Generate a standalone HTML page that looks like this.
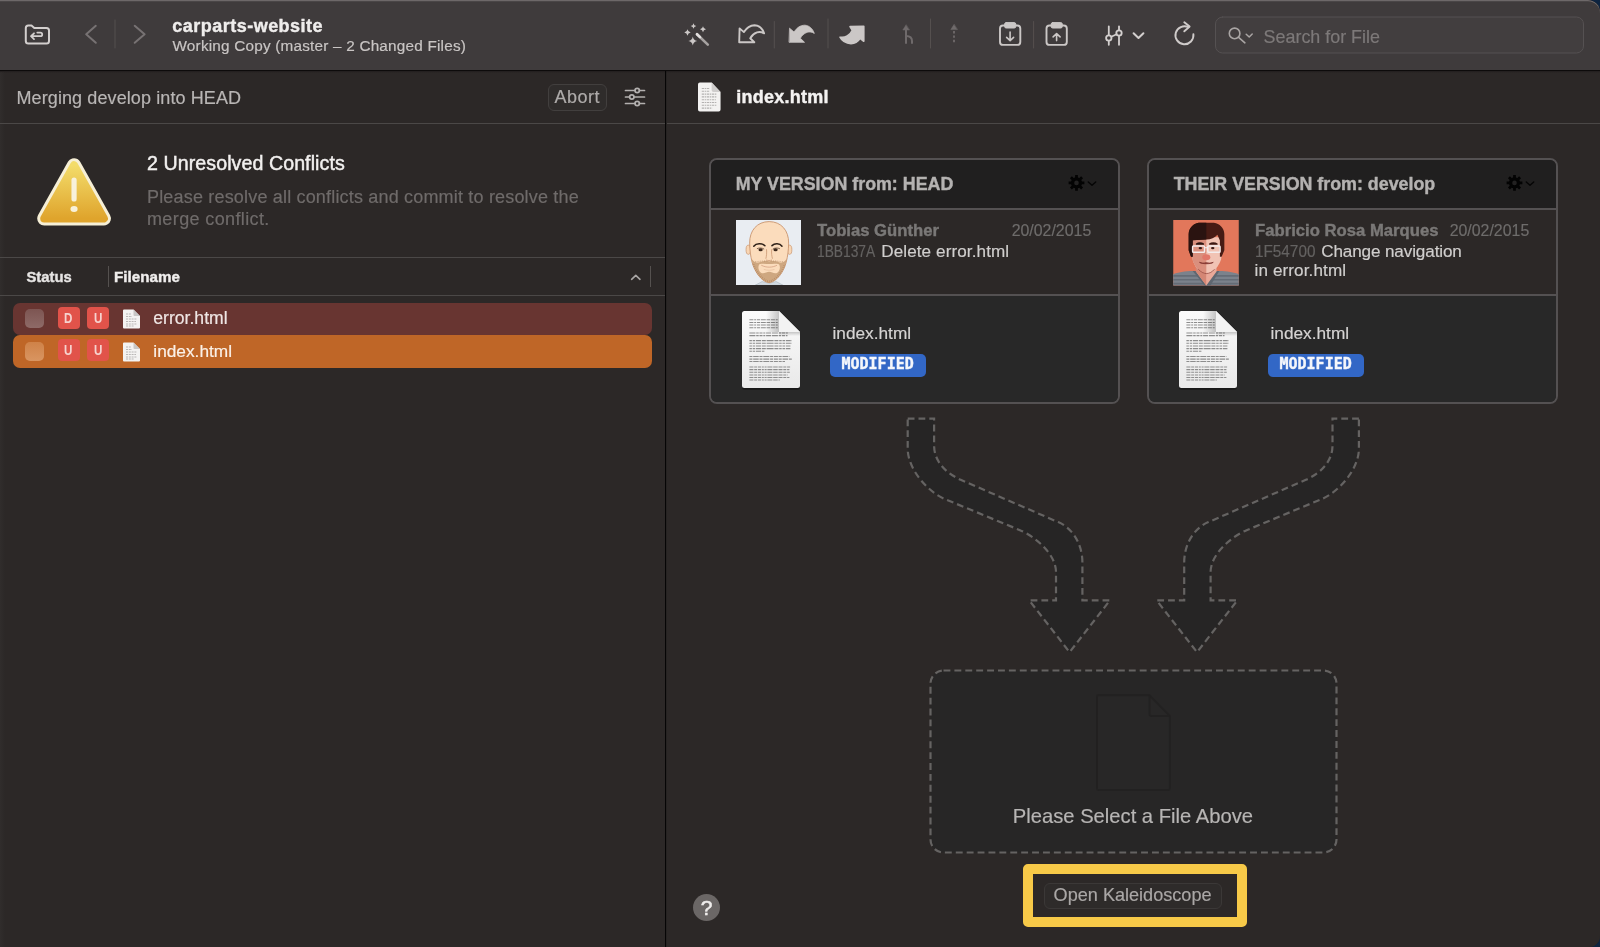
<!DOCTYPE html>
<html lang="en">
<head>
<meta charset="utf-8">
<title>carparts-website</title>
<style>
*{box-sizing:border-box;margin:0;padding:0}
html,body{width:1600px;height:947px;overflow:hidden;background:#0d2440}
body{font-family:"Liberation Sans",sans-serif;color:#dcdcdc;position:relative}
.abs{position:absolute}
.t{position:absolute;white-space:nowrap;line-height:1;-webkit-text-stroke:.18px currentColor}
.t[style*="font-weight:700"]{-webkit-text-stroke:.4px currentColor}
#win{will-change:transform;position:absolute;left:0;top:0;width:1600px;height:947px;background:#2c2827;border-radius:0 12px 11px 0;overflow:hidden}
#rim{position:absolute;left:-2px;top:0;width:1602px;height:960px;border-radius:0 12px 0 0;box-shadow:inset 0 1.2px 0 0 #6d6869;pointer-events:none}
#ledge{position:absolute;left:0;top:72px;width:5px;height:875px;background:linear-gradient(90deg,rgba(255,255,255,.025),rgba(255,255,255,0))}
#toolbar{position:absolute;left:0;top:0;width:1600px;height:70px;background:#3f3b3c}
#tbline{position:absolute;left:0;top:70px;width:1600px;height:3px;background:linear-gradient(#0d0b0b 0,#0d0b0b 34%,#231f1f 45%,#2c2827 100%)}
#left{position:absolute;left:0;top:71px;width:665px;height:876px;background:#2c2827}
#right{position:absolute;left:666px;top:71px;width:934px;height:876px;background:#2c2827}
#vdiv{position:absolute;left:665px;top:71px;width:1px;height:876px;background:#060505;box-shadow:.5px 0 0 rgba(0,0,0,.25)}
.hl{position:absolute;height:1px;background:#4b4847}
.sep{position:absolute;width:1px;background:#514d4e}
.bd span{display:inline-block;transform:scaleX(.8)}
.bd{width:22px;height:22px;border-radius:4px;background:#e1534a;color:#f6d3cf;font-size:14.5px;font-weight:700;text-align:center;line-height:22px}
</style>
</head>
<body>
<div id="win">
<div id="toolbar"></div>
<div id="left"></div>
<div id="right"></div>
<div id="tbline"></div>
<div id="vdiv"></div>
<div id="ledge"></div>

<!-- TOOLBAR -->
<svg class="abs" style="left:0;top:0" width="1600" height="72" viewBox="0 0 1600 72" fill="none" stroke-linecap="round" stroke-linejoin="round">
<!-- folder -->
<g stroke="#d3cfce" stroke-width="2">
<path d="M25.8 28 a2.5 2.5 0 0 1 2.5 -2.5 H31.5 L34.3 27.9 H46.5 a2.5 2.5 0 0 1 2.5 2.5 V41 a2.5 2.5 0 0 1 -2.5 2.5 H28.3 a2.5 2.5 0 0 1 -2.5 -2.5 Z"/>
<path d="M34 33.3 L31 36.2 L34 39.1 M31.3 36.2 H40.4 a1.8 1.8 0 0 0 0 -3.6 H37.3" stroke-width="1.8"/>
</g>
<!-- nav -->
<path d="M95.8 25.8 L86.2 34.3 L95.8 42.8" stroke="#777273" stroke-width="2"/>
<path d="M134.7 25.8 L144.6 34.3 L134.7 42.8" stroke="#777273" stroke-width="2"/>
<path d="M115 20 V48" stroke="#55504f" stroke-width="1"/>
<!-- magic wand -->
<g fill="#cbc7c6" stroke="none">
<path d="M693.5 23.2 q0.4 2.4 2.8 2.8 q-2.4 0.4 -2.8 2.8 q-0.4 -2.4 -2.8 -2.8 q2.4 -0.4 2.8 -2.8Z"/>
<path d="M703 26.2 q0.45 2.55 3 3 q-2.55 0.45 -3 3 q-0.45 -2.55 -3 -3 q2.55 -0.45 3 -3Z"/>
<path d="M687.5 29.3 q0.5 2.7 3.2 3.2 q-2.7 0.5 -3.2 3.2 q-0.5 -2.7 -3.2 -3.2 q2.7 -0.5 3.2 -3.2Z"/>
<path d="M692.8 36.6 q0.6 3.8 4.4 4.4 q-3.8 0.6 -4.4 4.4 q-0.6 -3.8 -4.4 -4.4 q3.8 -0.6 4.4 -4.4Z"/>
</g>
<path d="M697 34.2 L707.8 44.6" stroke="#a6a2a1" stroke-width="2.6"/>
<path d="M697 34.2 L700 37.1" stroke="#e2dfde" stroke-width="2.6"/>
<!-- pull outline -->
<path id="pullp" d="M739.6 28.4 L743.9 32.1 C746.5 27.8 750 25.3 754.5 25.2 C759 25.4 762.6 28.8 764.1 33.4 C761.8 31.9 759.3 31.6 757 32.3 C753.8 33.4 751.5 35.6 750.2 38.3 L754.3 42.3 H739.2 Z" stroke="#cbc7c6" stroke-width="1.9"/>
<path d="M774.3 21.5 V48" stroke="#55504f" stroke-width="1"/>
<!-- fetch filled -->
<path d="M739.6 28.4 L743.9 32.1 C746.5 27.8 750 25.3 754.5 25.2 C759 25.4 762.6 28.8 764.1 33.4 C761.8 31.9 759.3 31.6 757 32.3 C753.8 33.4 751.5 35.6 750.2 38.3 L754.3 42.3 H739.2 Z" transform="translate(50.2 0)" fill="#cbc7c6" stroke="#cbc7c6" stroke-width="0.8"/>
<path d="M828 19 V48" stroke="#55504f" stroke-width="1"/>
<!-- push filled -->
<path d="M850 26.6 L863.8 26.2 V41.3 L860.1 38.3 C858 41.6 855 43.6 851 43.6 C846.5 43.4 842 41 840 37.2 C842.5 37.7 845 37.3 847.2 36 C849.7 34.6 851.4 32.6 852.3 30.4 Z" fill="#cbc7c6" stroke="#cbc7c6" stroke-width="1.6"/>
<!-- merge (dim) -->
<g stroke="#6f6a6b" stroke-width="2">
<path d="M906 43 V28"/>
<path d="M906 36 C910 36 912 38 912 41 V43"/>
<path d="M906 25 L902.8 30 H909.2 Z" fill="#6f6a6b" stroke-width=".5"/>
</g>
<path d="M930.5 19 V48" stroke="#55504f" stroke-width="1"/>
<!-- rebase (dim dashed) -->
<g stroke="#6f6a6b">
<path d="M954 31 V43.5" stroke-width="1.8" stroke-dasharray="2.4 2" stroke-linecap="butt"/>
<path d="M954 24.6 L950.8 29.6 H957.2 Z" fill="#6f6a6b" stroke-width=".5"/>
</g>
<!-- stash -->
<g stroke="#cbc7c6" stroke-width="1.9">
<rect x="1000" y="25.5" width="20.3" height="19.4" rx="3"/>
<rect x="1004.6" y="22.6" width="11.2" height="5.4" rx="1.6" fill="#cbc7c6" stroke-width="1"/>
<path d="M1010.1 32 V40.4 M1006.6 37.4 L1010.1 40.7 L1013.6 37.4" stroke-width="1.6"/>
<rect x="1046.5" y="25.5" width="20.3" height="19.4" rx="3"/>
<rect x="1051.1" y="22.6" width="11.2" height="5.4" rx="1.6" fill="#cbc7c6" stroke-width="1"/>
<path d="M1056.6 40.6 V33.8 M1053.1 36.9 L1056.6 33.6 L1060.1 36.9" stroke-width="1.6"/>
</g>
<path d="M1033.6 21.5 V48" stroke="#55504f" stroke-width="1"/>
<!-- sliders -->
<g stroke="#d3cfce" stroke-width="1.8">
<path d="M1108.8 26.3 V35 M1108.8 41 V44.8 M1119 26.3 V30 M1119 36 V44.8 M1111.3 36.7 L1116.6 34.2"/>
<circle cx="1108.8" cy="38" r="2.7"/><circle cx="1119" cy="33" r="2.7"/>
<path d="M1133.6 33.2 L1138.5 38 L1143.4 33.2" stroke-width="2"/>
</g>
<!-- refresh -->
<g stroke="#cfcbca" stroke-width="1.9">
<path d="M1193.4 34.2 A9 9 0 1 1 1188.5 27.2"/>
<path d="M1184.3 22.3 L1189.6 26.6 L1184.3 31.3"/>
</g>
<!-- search -->
<rect x="1215.5" y="17" width="368" height="36" rx="7" fill="#423e3f" stroke="#555152" stroke-width="1"/>
<g stroke="#a9a5a4" stroke-width="1.6">
<circle cx="1234.6" cy="33.4" r="5.3"/><path d="M1238.6 37.3 L1244.9 42.8"/>
<path d="M1246.2 34.2 L1249.2 37 L1252.2 34" stroke-width="1.5"/>
</g>
</svg>
<div class="t" style="left:172.3px;top:16.8px;font-size:18px;font-weight:700;letter-spacing:0.48px;color:#efedec">carparts-website</div>
<div class="t" style="left:172.5px;top:38.4px;font-size:15.3px;letter-spacing:0.21px;color:#c9c5c4">Working Copy (master – 2 Changed Files)</div>
<div class="t" style="left:1263.6px;top:29.3px;font-size:17.9px;color:#7d7979">Search for File</div>
<svg width="0" height="0" style="position:absolute"><defs>
<g id="sfile">
<path d="M1 0.5 H10.5 L17 7 V18.5 a1 1 0 0 1 -1 1 H1 a1 1 0 0 1 -1 -1 V1.5 a1 1 0 0 1 1 -1 Z" fill="#f4f3f2"/>
<path d="M10.5 0.5 V6 a1 1 0 0 0 1 1 H17 Z" fill="#c9c7c6"/>
<path d="M3 5H8M3 7.5H9M3 10H14M3 12.5H13M3 15H14M3 17H11" stroke="#b9b7b6" stroke-width="1" stroke-dasharray="2 0.8"/>
</g>
</defs></svg>
<!-- LEFT PANEL -->
<div class="t" style="left:16.5px;top:88.6px;font-size:18px;letter-spacing:.1px;color:#b9b6b5">Merging develop into HEAD</div>
<div class="abs" style="left:548px;top:84px;width:59px;height:27px;border:1px solid #423f3e;border-radius:6px;background:#2f2c2b"></div>
<div class="t" style="left:554.5px;top:87.6px;font-size:18px;letter-spacing:0.5px;color:#aeabaa">Abort</div>
<svg class="abs" style="left:624px;top:86px" width="22" height="22" viewBox="0 0 22 22" fill="none" stroke="#b3b0af" stroke-width="1.7" stroke-linecap="round">
<path d="M1.5 4.5H11M15.5 4.5H20.5M1.5 11H5.5M10 11H20.5M1.5 17.5H11M15.5 17.5H20.5"/>
<circle cx="13.2" cy="4.5" r="2.2"/><circle cx="7.8" cy="11" r="2.2"/><circle cx="13.2" cy="17.5" r="2.2"/>
</svg>
<div class="hl" style="left:0;top:122.5px;width:665px"></div>

<svg class="abs" style="left:33px;top:154px" width="82" height="76" viewBox="0 0 82 76">
<defs><linearGradient id="wg" x1="0" y1="0" x2="0" y2="1"><stop offset="0" stop-color="#f3dc6a"/><stop offset="1" stop-color="#dfa42c"/></linearGradient></defs>
<path d="M41.05 11.2 L70.9 64.5 H11.2 Z" fill="#f6efd6" stroke="#f6efd6" stroke-width="14" stroke-linejoin="round"/>
<path d="M41.05 11.2 L70.9 64.5 H11.2 Z" fill="url(#wg)" stroke="url(#wg)" stroke-width="8" stroke-linejoin="round"/>
<path d="M41.05 26 V45" stroke="#f8f1da" stroke-width="5.2" stroke-linecap="round"/>
<ellipse cx="41.05" cy="55" rx="3.6" ry="2.9" fill="#f8f1da"/>
</svg>
<div class="t" style="left:147px;top:153.7px;font-size:19.6px;letter-spacing:.08px;-webkit-text-stroke:.45px currentColor;color:#f2f0ef">2 Unresolved Conflicts</div>
<div class="t" style="left:147px;top:187.7px;font-size:18px;letter-spacing:0.18px;color:#6f6b6a">Please resolve all conflicts and commit to resolve the</div>
<div class="t" style="left:147px;top:209.9px;font-size:18px;letter-spacing:0.38px;color:#6f6b6a">merge conflict.</div>
<div class="hl" style="left:0;top:257px;width:665px"></div>

<div class="t" style="left:26.5px;top:269.5px;font-size:14.8px;font-weight:700;color:#e6e4e3">Status</div>
<div class="sep" style="left:107.5px;top:266px;height:21px;background:#55514f"></div>
<div class="t" style="left:114px;top:269.3px;font-size:15.2px;font-weight:700;color:#f0eeed">Filename</div>
<svg class="abs" style="left:629px;top:273px" width="13" height="9" viewBox="0 0 13 9" fill="none" stroke="#a9a6a5" stroke-width="1.6" stroke-linecap="round" stroke-linejoin="round"><path d="M2.6 6.3 L6.8 2.4 L11 6.3"/></svg>
<div class="sep" style="left:650px;top:266px;height:21px;background:#55514f"></div>
<div class="hl" style="left:0;top:294.5px;width:665px"></div>

<div class="abs" style="left:13px;top:302.5px;width:638.5px;height:32px;border-radius:7px;background:#683531"></div>
<div class="abs" style="left:13px;top:335px;width:638.5px;height:32.5px;border-radius:7px;background:#bf6627"></div>
<div class="abs" style="left:25px;top:309px;width:19px;height:19px;border-radius:5px;background:linear-gradient(#7d5552,#8e6a67)"></div>
<div class="abs" style="left:25px;top:341.5px;width:19px;height:19px;border-radius:5px;background:linear-gradient(#cf8248,#d99561)"></div>
<div class="abs bd" style="left:57.5px;top:306.5px"><span>D</span></div>
<div class="abs bd" style="left:87px;top:306.5px"><span>U</span></div>
<div class="abs bd" style="left:57.5px;top:339px"><span>U</span></div>
<div class="abs bd" style="left:87px;top:339px"><span>U</span></div>
<svg class="abs" style="left:123px;top:309px" width="18" height="20" viewBox="0 0 18 20"><use href="#sfile"/></svg>
<svg class="abs" style="left:123px;top:341.5px" width="18" height="20" viewBox="0 0 18 20"><use href="#sfile"/></svg>
<div class="t" style="left:153.3px;top:310.2px;font-size:17.6px;color:#efe6e4">error.html</div>
<div class="t" style="left:153.3px;top:342.5px;font-size:17.3px;color:#fbf1e8">index.html</div>
<svg width="0" height="0" style="position:absolute"><defs>
<linearGradient id="pg" x1="0" y1="0" x2="0" y2="1"><stop offset="0" stop-color="#fbfbfb"/><stop offset="1" stop-color="#e9e9e9"/></linearGradient>
<linearGradient id="fs" x1="0" y1="0" x2="1" y2="0"><stop offset="0" stop-color="#000" stop-opacity="0"/><stop offset="1" stop-color="#000" stop-opacity="0.22"/></linearGradient>
<linearGradient id="fs2" x1="0" y1="0" x2="0" y2="1"><stop offset="0" stop-color="#000" stop-opacity="0.2"/><stop offset="1" stop-color="#000" stop-opacity="0"/></linearGradient>
<g id="bfile">
<path d="M2.5 1 H37 L58 22 V75 a2.5 2.5 0 0 1 -2.5 2.5 H2.5 a2.5 2.5 0 0 1 -2.5 -2.5 V3.5 a2.5 2.5 0 0 1 2.5 -2.5 Z" fill="#0b0b0b" opacity=".55" transform="translate(0 1.2)"/>
<path d="M2.5 0 H37 L58 21 V74.5 a2.5 2.5 0 0 1 -2.5 2.5 H2.5 a2.5 2.5 0 0 1 -2.5 -2.5 V2.5 a2.5 2.5 0 0 1 2.5 -2.5 Z" fill="url(#pg)"/>
<g stroke="#8d8d8d" stroke-width="1.05" fill="none">
<path d="M7.4 8.7H36 M7.4 11.4H36 M7.4 14H36 M7.4 16.7H36" stroke-dasharray="4 .8 2 .8 3 .8 5 .8 3.5 .8"/>
<path d="M7.4 21.9H46 M7.4 24.6H45.5" stroke-dasharray="6 .8 2.5 .8 3 .8 2 .8 5 .8"/>
<path d="M7.4 29.6H50 M7.4 32.3H50 M7.4 34.9H48.4 M7.4 37.6H48.4 M7.4 40.2H22.4" stroke-dasharray="2.5 .8 2.5 .8 5 .8 4 .8 7 .8 4 .8"/>
<path d="M7.4 45.5H47.4 M7.4 48.1H50.4 M7.4 50.4H43" stroke-dasharray="3 .8 5.5 .8 3 .8 6 .8 3 .8 4 .8"/>
<path d="M7.4 55.9H48.4 M7.4 58.6H47.4 M7.4 61.2H47.8 M7.4 63.9H45.7 M7.4 66.5H47.4 M7.4 68.9H37.8" stroke-dasharray="4 .8 3 .8 3 .8 2 .8 2 .8 5 .8 4.5 .8"/>
</g>
<rect x="24" y="0" width="13" height="21" fill="url(#fs)"/>
<rect x="37" y="21" width="21" height="4" fill="url(#fs2)"/>
<path d="M37 0 V18.5 a2.5 2.5 0 0 0 2.5 2.5 H58 Z" fill="#f3f3f3"/>
</g>
<g id="gear" transform="translate(0 .4)"><path d="M7.11 3.07 L7.15 0.62 L9.85 0.62 L9.89 3.07 L11.36 3.68 L13.12 1.97 L15.03 3.88 L13.32 5.64 L13.93 7.11 L16.38 7.15 L16.38 9.85 L13.93 9.89 L13.32 11.36 L15.03 13.12 L13.12 15.03 L11.36 13.32 L9.89 13.93 L9.85 16.38 L7.15 16.38 L7.11 13.93 L5.64 13.32 L3.88 15.03 L1.97 13.12 L3.68 11.36 L3.07 9.89 L0.62 9.85 L0.62 7.15 L3.07 7.11 L3.68 5.64 L1.97 3.88 L3.88 1.97 L5.64 3.68Z" fill="#030303"/><circle cx="8.5" cy="8.5" r="2.3" fill="#222121"/><path d="M20.3 7.6 L24 10.8 L27.7 7.6" fill="none" stroke="#050505" stroke-width="1.4" stroke-linecap="round" stroke-linejoin="round"/></g>
</defs></svg>
<!-- RIGHT PANEL -->
<svg class="abs" style="left:698px;top:82px" width="23.5" height="30" viewBox="0 0 25 30" preserveAspectRatio="none">
<path d="M2 0.500 H14.500 L24 10 V27.500 a2 2 0 0 1 -2 2 H2 a2 2 0 0 1 -2 -2 V2.500 a2 2 0 0 1 2 -2 Z" fill="#f3f2f1"/>
<path d="M14.500 0.500 V8 a2 2 0 0 0 2 2 H24 Z" fill="#cfcdcc"/>
<path d="M4 6.500H12 M4 9.300H12 M4 12.100H20 M4 14.900H20 M4 17.700H19 M4 20.500H20 M4 23.300H20 M4 26.100H15" stroke="#b4b2b1" stroke-width="1.100" stroke-dasharray="2.500 .7 1.500 .7"/>
</svg>
<div class="t" style="left:736.3px;top:88.300px;font-size:18px;font-weight:700;letter-spacing:.25px;color:#f4f2f1">index.html</div>
<div class="hl" style="left:667px;top:123px;width:933px"></div>
<div class="abs" style="left:709px;top:158px;width:411px;height:246px;border:2px solid #545152;border-radius:8px;background:#2c2827;overflow:hidden">
<div class="abs" style="left:0;top:0;width:411px;height:48px;background:#201f1f"></div>
<div class="abs" style="left:0;top:48px;width:411px;height:2px;background:#545152"></div>
<div class="abs" style="left:0;top:134px;width:411px;height:2px;background:#545152"></div>
<div class="abs" style="left:0;top:136px;width:411px;height:110px;background:#282828"></div>
</div>
<div class="t" style="left:735.7px;top:176.3px;font-size:17.84px;font-weight:700;color:#b4b2b1">MY VERSION from: HEAD</div>
<svg class="abs" style="left:1067.5px;top:174.3px" width="30" height="18" viewBox="0 0 30 18"><use href="#gear"/></svg>
<svg class="abs" style="left:735.6px;top:219.9px" width="65.3" height="65.3" viewBox="0 0 65 65"><rect width="65" height="65" fill="#e9edf2"/>
<path d="M19 65 L26 61.3 L33 63 L40 61.3 L47 65Z" fill="#d3dbe2" stroke="#aab4bd" stroke-width=".6"/>
<ellipse cx="12.3" cy="29.6" rx="2.3" ry="4.6" fill="#f9d6b4" stroke="#c9956f" stroke-width=".7"/>
<ellipse cx="53.3" cy="29.6" rx="2.3" ry="4.6" fill="#f9d6b4" stroke="#c9956f" stroke-width=".7"/>
<path d="M33 1.6 C45 1.6 52.6 10.5 52.4 23 C52.3 30 51.5 36 50 42 C48 50 41 61.8 33 62.4 C25 61.8 18 50 16 42 C14.5 36 13.7 30 13.6 23 C13.4 10.5 21 1.6 33 1.6Z" fill="#fbdcbc" stroke="#c9956f" stroke-width=".9"/>
<path d="M15.6 38.5 C16.2 43 17.5 47 20 51 C23 56.5 28 62 33 62.4 C38 62 43 56.5 46 51 C48.5 47 49.8 43 50.4 38.5 C48.8 41.2 46 42.8 43.2 42.4 C40 41 36 40.6 33 41.2 C30 40.6 26 41 22.800 42.400 C20 42.800 17.2 41.2 15.6 38.5Z M23.200 44 C26.500 43 30 43.600 33 43.900 C36 43.600 39.500 43 42.800 44 C44.600 47 43.600 50.500 40.800 52.800 C38 53.600 35.500 52 33 51.600 C30.500 52 28 53.600 25.200 52.800 C22.400 50.500 21.400 47 23.200 44Z" fill="#c39a70" fill-rule="evenodd" opacity=".8"/>
<path d="M17.5 44 C19 49 22 54 26 57.500 C29 60 31 61 33 61 C35 61 37 60 40 57.500 C44 54 47 49 48.500 44" fill="none" stroke="#a87c55" stroke-width="2.200" stroke-dasharray=".7 1.300" opacity=".6"/>
<path d="M19 41.500 C23 41.800 28 40.200 33 40.500 C38 40.200 43 41.800 47 41.500" fill="none" stroke="#a87c55" stroke-width="1.300" stroke-dasharray=".7 1.100" opacity=".6"/>
<path d="M25.5 45.2 C30 47.600 36 47.600 40.500 45.200" fill="none" stroke="#d9a98a" stroke-width=".9" stroke-linecap="round"/>
<path d="M28 49.3 C31 50.300 35 50.300 38 49.300" fill="none" stroke="#e7bd9d" stroke-width=".7" stroke-linecap="round"/>
<path d="M17.700 26.100 C20 23.200 26 22.800 28.800 25.700" fill="none" stroke="#2e2118" stroke-width="1.5" stroke-linecap="round"/>
<path d="M35.800 25.500 C38.500 22.800 43.500 23 45.800 26.100" fill="none" stroke="#2e2118" stroke-width="1.5" stroke-linecap="round"/>
<path d="M20.800 28.600 C23 27.600 26 27.600 28 29" fill="none" stroke="#4a3323" stroke-width=".7"/>
<path d="M36.600 29 C38.500 27.600 41.500 27.600 43.700 28.600" fill="none" stroke="#4a3323" stroke-width=".7"/>
<ellipse cx="24.5" cy="29.500" rx="2.100" ry="1.500" fill="#3a271b"/>
<ellipse cx="39.400" cy="29.500" rx="2.100" ry="1.500" fill="#3a271b"/>
<path d="M30.400 29.500 C30.800 33 30.300 36 29.800 38.200 M35.500 29.500 C35.100 33 35.700 36 36.200 38.200" fill="none" stroke="#c58e68" stroke-width=".7" stroke-linecap="round"/>
<path d="M30.500 39.800 C32 40.600 34 40.600 35.500 39.800" fill="none" stroke="#d2a07c" stroke-width=".7" stroke-linecap="round"/></svg>
<div class="t" style="left:817.0px;top:222.6px;font-size:16.68px;font-weight:700;color:#7a7877">Tobias Günther</div>
<div class="t" style="left:1011.7px;top:223.2px;font-size:15.9px;color:#6e6c6b">20/02/2015</div>
<div class="t" style="left:817.3px;top:243.9px;font-size:15.6px;transform-origin:0 50%;transform:scaleX(0.883);color:#646261">1BB137A</div>
<div class="t" style="left:881.2px;top:242.8px;font-size:17.1px;letter-spacing:0.1px;color:#d0cecd">Delete error.html</div>
<svg class="abs" style="left:742px;top:311px" width="58" height="79" viewBox="0 0 58 79"><use href="#bfile"/></svg>
<div class="t" style="left:832.5px;top:325.1px;font-size:17.25px;color:#d6d4d3">index.html</div>
<div class="abs" style="left:829.7px;top:353.7px;width:96px;height:23px;border-radius:5px;background:#3267c6"></div>
<div class="t" style="left:841.5px;top:356.7px;font-family:'DejaVu Sans Mono','Liberation Mono',monospace;font-weight:700;font-size:15px;color:#f4f6fb">MODIFIED</div>
<div class="abs" style="left:1147px;top:158px;width:411px;height:246px;border:2px solid #545152;border-radius:8px;background:#2c2827;overflow:hidden">
<div class="abs" style="left:0;top:0;width:411px;height:48px;background:#201f1f"></div>
<div class="abs" style="left:0;top:48px;width:411px;height:2px;background:#545152"></div>
<div class="abs" style="left:0;top:134px;width:411px;height:2px;background:#545152"></div>
<div class="abs" style="left:0;top:136px;width:411px;height:110px;background:#282828"></div>
</div>
<div class="t" style="left:1173.7px;top:176.3px;font-size:17.84px;font-weight:700;color:#b4b2b1">THEIR VERSION from: develop</div>
<svg class="abs" style="left:1505.5px;top:174.3px" width="30" height="18" viewBox="0 0 30 18"><use href="#gear"/></svg>
<svg class="abs" style="left:1173px;top:220px" width="66" height="65.5" viewBox="0 0 65 65"><rect width="65" height="65" fill="#e2775b"/>
<path d="M0 65 V53.800 C4 51.800 12 50.600 19.300 50.500 H45.700 C53 50.600 61 51.800 65 53.800 V65Z" fill="#7b828c"/>
<path d="M0 55.500H65 M0 59.300H65 M0 63.100H65" stroke="#656c76" stroke-width="1.700"/>
<path d="M19.300 50.500 L31 65 H37 L45.700 50.500Z" fill="#5f6771"/>
<path d="M22.500 44 V51 L32.500 64.500 L32.800 65 L43 51 V44Z" fill="#e9a898"/>
<path d="M22.500 44 V51 L32.700 65 V44Z" fill="#d48674"/>
<path d="M18.900 17 H47.900 V36 C47.900 40 45.500 45 41 49.500 C38.500 51.800 36 53 32.800 53.200 C30 53 27.500 51.800 25 49.500 C20.500 45 18.900 40 18.900 36Z" fill="#f1c3b4"/>
<path d="M18.900 17 H32.800 V53.200 C30 53 27.500 51.800 25 49.500 C20.500 45 18.900 40 18.900 36Z" fill="#da8f7d"/>
<path d="M24.800 48.800 C27.500 51.800 30 53 32.800 53.200 C36 53 38.500 51.800 41 48.800" fill="none" stroke="#8f3f36" stroke-width=".7"/>
<path d="M25.300 2.800 H40.400 C46 3.600 50.500 8 50.700 14 V30 L48 36.500 H46.300 V20.300 L43.800 14.600 C41 18 36 19.800 32 19.300 L19.300 20.200 V36.500 H17.600 L15.300 30 V14 C15.500 8 20 3.600 25.300 2.800Z" fill="#471b14"/>
<path d="M25.300 2.800 H32.800 V19.300 L19.300 20.200 V36.500 H17.600 L15.300 30 V14 C15.500 8 20 3.600 25.300 2.800Z" fill="#2a1310"/>
<path d="M22.500 23.200 C25 21.800 28 21.800 30.500 23.200 V24.500 H22.500Z" fill="#2a1310"/>
<path d="M35.600 23.200 C38 21.800 41.500 21.800 44 23.200 V24.500 H35.600Z" fill="#3b1712"/>
<ellipse cx="26.900" cy="27.900" rx="1.700" ry="1.200" fill="#3a1a16"/>
<ellipse cx="39.200" cy="27.900" rx="1.700" ry="1.200" fill="#3a1a16"/>
<g fill="none" stroke="#f3ecec" stroke-width="1.400"><rect x="19.200" y="25.800" width="11.800" height="6.200" rx=".8"/><rect x="34.300" y="25.800" width="12.200" height="6.200" rx=".8"/><path d="M31 27.500 H34.300" stroke-width="1.100"/></g>
<ellipse cx="32.800" cy="37" rx="4" ry="2.900" fill="#e1786a"/>
<path d="M26 42 C28.500 43.300 30.500 42.600 32.800 42.300 C35 42.600 37.200 43.300 39.700 42 C37.500 43.900 28.500 43.900 26 42Z" fill="#7c2f2a" stroke="#7c2f2a" stroke-width=".7" stroke-linejoin="round"/></svg>
<div class="t" style="left:1255.0px;top:222.6px;font-size:16.68px;font-weight:700;color:#7a7877">Fabricio Rosa Marques</div>
<div class="t" style="left:1449.7px;top:223.2px;font-size:15.9px;color:#6e6c6b">20/02/2015</div>
<div class="t" style="left:1255.3px;top:243.9px;font-size:15.6px;transform-origin:0 50%;transform:scaleX(0.981);color:#646261">1F54700</div>
<div class="t" style="left:1321.2px;top:242.8px;font-size:17.1px;letter-spacing:-0.12px;color:#d0cecd">Change navigation</div>
<div class="t" style="left:1254.5px;top:262.4px;font-size:17.1px;letter-spacing:.11px;color:#d0cecd">in error.html</div>
<svg class="abs" style="left:1179.3px;top:311px" width="58" height="79" viewBox="0 0 58 79"><use href="#bfile"/></svg>
<div class="t" style="left:1270.5px;top:325.1px;font-size:17.25px;color:#d6d4d3">index.html</div>
<div class="abs" style="left:1267.7px;top:353.7px;width:96px;height:23px;border-radius:5px;background:#3267c6"></div>
<div class="t" style="left:1279.5px;top:356.7px;font-family:'DejaVu Sans Mono','Liberation Mono',monospace;font-weight:700;font-size:15px;color:#f4f6fb">MODIFIED</div>

<svg class="abs" style="left:880px;top:400px" width="520" height="470" viewBox="880 400 520 470" fill="none">
<path id="arrL" d="M907.7 418.6 H934.1 V445.5 C934.1 461.5 946 473.2 960.7 479.8 L1058.2 522.1 C1073 528.4 1082.4 544.5 1082.4 562.5 V600.3 H1110 L1069.6 652.2 L1029.2 600.3 H1056 V572 C1056 555 1036.6 537.2 1020 530.2 L945.4 499.3 C927 491.5 907.7 468.7 907.7 448.7 Z" fill="#262525" stroke="#656362" stroke-width="2.2" stroke-dasharray="6.8 4"/>
<path d="M907.7 418.6 H934.1 V445.5 C934.1 461.5 946 473.2 960.7 479.8 L1058.2 522.1 C1073 528.4 1082.4 544.5 1082.4 562.5 V600.3 H1110 L1069.6 652.2 L1029.2 600.3 H1056 V572 C1056 555 1036.6 537.2 1020 530.2 L945.4 499.3 C927 491.5 907.7 468.7 907.7 448.7 Z" transform="translate(2266.6 0) scale(-1 1)" fill="#262525" stroke="#656362" stroke-width="2.2" stroke-dasharray="6.8 4"/>
<rect x="930.500" y="670.500" width="406" height="182" rx="13" fill="#272626" stroke="#656362" stroke-width="2.2" stroke-dasharray="6.9 4"/>
<path d="M1098.5 695.300 H1149.500 L1169.800 716 V788.500 a1.500 1.500 0 0 1 -1.500 1.500 H1098.500 a1.500 1.500 0 0 1 -1.500 -1.500 V696.800 a1.500 1.500 0 0 1 1.500 -1.500 Z" fill="#282727" stroke="#222121" stroke-width="1.900" stroke-linejoin="round"/>
<path d="M1149.500 695.300 V714 a2 2 0 0 0 2 2 H1169.800" fill="none" stroke="#222121" stroke-width="1.900"/>
</svg>
<div class="t" style="left:1012.800px;top:806.2px;font-size:20.2px;color:#b7b5b4">Please Select a File Above</div>
<div class="abs" style="left:1023px;top:864px;width:224px;height:63px;border:10px solid #f7c948;border-radius:5px"></div>
<div class="abs" style="left:1044px;top:883px;width:178px;height:26px;border:1px solid #3b3837;border-radius:6px;background:#2e2b2a"></div>
<div class="t" style="left:1053.600px;top:886.1px;font-size:18.1px;color:#aaa7a6">Open Kaleidoscope</div>
<div class="abs" style="left:693px;top:894px;width:27.3px;height:27.3px;border-radius:50%;background:#6b6766"></div>
<div class="t" style="left:700.8px;top:897.4px;font-size:21px;-webkit-text-stroke:.5px currentColor;color:#efedec">?</div>

<div id="rim"></div>
</div>
</body>
</html>
